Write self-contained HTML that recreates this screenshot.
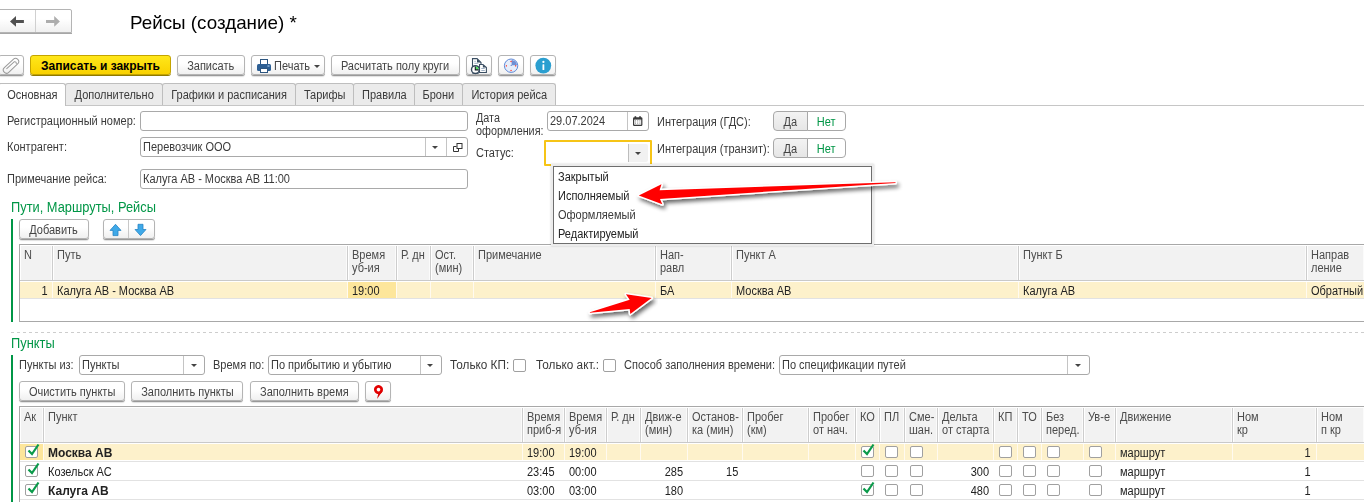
<!DOCTYPE html>
<html lang="ru"><head><meta charset="utf-8"><title>Рейсы (создание)</title>
<style>
*{box-sizing:border-box;margin:0;padding:0}
html,body{width:1364px;height:502px;overflow:hidden;background:#fff}
body{position:relative;font-family:"Liberation Sans",sans-serif;font-size:12px;color:#3a3a3a}
.a{position:absolute}
.t{position:absolute;white-space:nowrap;line-height:14px;transform:scaleX(.917);transform-origin:0 0}
.t.r{transform-origin:100% 0;text-align:right}
.s{display:inline-block;white-space:nowrap;transform:scaleX(.917);transform-origin:50% 50%}
.btn{position:absolute;border:1px solid #b4b4b4;border-radius:3px;background:linear-gradient(#ffffff 40%,#f0f0f0);box-shadow:0 1px 0 #999,0 2px 1px rgba(0,0,0,.13);text-align:center;line-height:20px;white-space:nowrap;color:#444}
.bd .s{transform:none}
b{display:inline-block;transform:scaleX(1.0905);transform-origin:0 0}
.inp{position:absolute;border:1px solid #a9a9a9;border-radius:3px;background:#fff;height:20px}
.sep{position:absolute;top:0;bottom:0;width:1px;background:#c4c4c4}
.tab{position:absolute;top:83px;height:22px;border:1px solid #bebebe;border-bottom:none;background:#ebebeb;line-height:22px;text-align:center;border-radius:3px 3px 0 0;color:#3a3a3a}
.grn{color:#009646;font-size:14px;line-height:16px}
.hd{position:absolute;background:#f2f2f2;border-right:1px solid #cdcdcd;box-shadow:inset 1px 0 0 #fff,inset -1px 0 0 #fbfbfb}
.h{color:#4c4c4c;line-height:13px}
.cb{position:absolute;width:13px;height:12px;border:1px solid #a0a0a0;border-radius:2px;background:#fff}
.tri{position:absolute;width:0;height:0;border-left:3px solid transparent;border-right:3px solid transparent;border-top:3px solid #444}
</style></head><body>

<div class="btn" style="left:-2px;top:9px;width:74px;height:24px;border-radius:2px 2px 0 0;box-shadow:0 1px 0 #a6a6a6"></div>
<div class="a" style="left:35px;top:10px;width:1px;height:22px;background:#d0d0d0"></div>
<svg class="a" style="left:0;top:9px" width="72" height="24" viewBox="0 9 72 24"><path d="M10 21.4 L16 16.1 V19.9 H23.9 V22.9 H16 V26.7 Z" fill="#505050"/><path d="M59.9 21.4 L54.2 16.1 V19.9 H46 V22.9 H54.2 V26.7 Z" fill="#adadad"/></svg>
<div class="t" style="left:130px;top:11px;font-size:19px;line-height:24px;color:#000;transform:scaleX(.99)">Рейсы (создание) *</div>
<div class="btn" style="left:-2px;top:55px;width:26px;height:20px"></div>
<div class="btn bd" style="left:30px;top:55px;width:141px;height:20px;background:linear-gradient(#ffe71a,#f9d100);border-color:#c4a400;color:#000;font-weight:bold;box-shadow:0 1px 0 #8f7a00"><span class="s">Записать и закрыть</span></div>
<div class="btn " style="left:177px;top:55px;width:68px;height:20px;"><span class="s">Записать</span></div>
<div class="btn" style="left:251px;top:55px;width:74px;height:20px"></div>
<div class="t " style="left:274px;top:59px;color:#444">Печать</div>
<div class="tri" style="left:314px;top:65px"></div>
<div class="btn " style="left:331px;top:55px;width:129px;height:20px;"><span class="s">Расчитать полу круги</span></div>
<div class="btn" style="left:466px;top:55px;width:26px;height:20px"></div>
<div class="btn" style="left:498px;top:55px;width:26px;height:20px"></div>
<div class="btn" style="left:530px;top:55px;width:26px;height:20px"></div>
<div class="a" style="left:0;top:105px;width:1364px;height:1px;background:#c6c6c6"></div>
<div class="tab" style="left:-2px;width:68px;background:#fff;height:23px;"><span class="s">Основная</span></div>
<div class="tab" style="left:65px;width:98px;"><span class="s">Дополнительно</span></div>
<div class="tab" style="left:162px;width:134px;"><span class="s">Графики и расписания</span></div>
<div class="tab" style="left:295px;width:59px;"><span class="s">Тарифы</span></div>
<div class="tab" style="left:353px;width:62px;"><span class="s">Правила</span></div>
<div class="tab" style="left:414px;width:49px;"><span class="s">Брони</span></div>
<div class="tab" style="left:462px;width:94px;"><span class="s">История рейса</span></div>
<div class="t " style="left:7px;top:114px;">Регистрационный номер:</div>
<div class="inp" style="left:140px;top:111px;width:328px"></div>
<div class="t " style="left:7px;top:140px;">Контрагент:</div>
<div class="inp" style="left:140px;top:137px;width:328px"><div class="sep" style="left:284px"></div><div class="sep" style="left:305px"></div></div>
<div class="t " style="left:143.3px;top:140px;color:#222transform:scaleX(0.93);">Перевозчик ООО</div>
<div class="tri" style="left:432px;top:146px"></div>
<div class="t " style="left:7px;top:172px;">Примечание рейса:</div>
<div class="inp" style="left:140px;top:169px;width:328px"></div>
<div class="t " style="left:143.3px;top:172px;color:#222transform:scaleX(0.926);">Калуга АВ - Москва АВ 11:00</div>
<div class="t " style="left:476px;top:111px;line-height:13px;margin-top:1px;transform:scaleX(0.9);">Дата<br>оформления:</div>
<div class="inp" style="left:547px;top:111px;width:102px"><div class="sep" style="left:79px"></div></div>
<div class="t " style="left:550.3px;top:114px;color:#222transform:scaleX(0.895);">29.07.2024</div>
<div class="t " style="left:476px;top:146px;">Статус:</div>
<div class="a" style="left:544px;top:140px;width:108px;height:26px;border:2px solid #f6c416;border-radius:1px;background:#fff"></div>
<div class="a" style="left:628px;top:144px;width:1px;height:18px;background:#bdbdbd"></div>
<div class="a" style="left:629px;top:144px;width:19px;height:18px;background:#f1f1f1;border-radius:0 2px 2px 0"></div>
<div class="tri" style="left:635px;top:152px"></div>
<div class="t " style="left:657px;top:115px;">Интеграция (ГДС):</div>
<div class="t " style="left:657px;top:142px;">Интеграция (транзит):</div>
<div class="btn" style="left:773px;top:111px;width:35px;height:20px;border-radius:4px 0 0 4px;border-color:#a8a8a8;box-shadow:none;background:linear-gradient(#f3f3f3,#e6e6e6)"><span class="s">Да</span></div>
<div class="btn" style="left:807px;top:111px;width:39px;height:20px;border-radius:0 4px 4px 0;border-color:#a8a8a8;box-shadow:none;color:#009646;background:#fff"><span class="s">Нет</span></div>
<div class="btn" style="left:773px;top:138px;width:35px;height:20px;border-radius:4px 0 0 4px;border-color:#a8a8a8;box-shadow:none;background:linear-gradient(#f3f3f3,#e6e6e6)"><span class="s">Да</span></div>
<div class="btn" style="left:807px;top:138px;width:39px;height:20px;border-radius:0 4px 4px 0;border-color:#a8a8a8;box-shadow:none;color:#009646;background:#fff"><span class="s">Нет</span></div>
<div class="t grn" style="left:10.6px;top:199px">Пути, Маршруты, Рейсы</div>
<div class="a" style="left:11px;top:219px;width:2px;height:103px;background:#009646"></div>
<div class="btn " style="left:19px;top:219px;width:70px;height:20px;"><span class="s">Добавить</span></div>
<div class="btn" style="left:103px;top:219px;width:52px;height:20px"></div>
<div class="a" style="left:128px;top:220px;width:1px;height:18px;background:#c8c8c8"></div>
<div class="a" style="left:19px;top:244px;width:1345px;height:78px;border:1px solid #a8a8a8;border-right:none;background:#fff"></div>
<div class="a" style="left:20px;top:280px;width:1344px;height:1px;background:#c9c9c9"></div>
<div class="a" style="left:20px;top:282px;width:1344px;height:16px;background:#fdf1cb"></div>
<div class="a" style="left:20px;top:298px;width:1344px;height:1px;background:#e2e2e2"></div>
<div class="hd" style="left:20px;top:246px;width:33px;height:34px"></div>
<div class="t h" style="left:24px;top:249px;">N</div>
<div class="a" style="left:52px;top:282px;width:1px;height:16px;background:#fffaf0"></div>
<div class="hd" style="left:53px;top:246px;width:295px;height:34px"></div>
<div class="t h" style="left:57px;top:249px;">Путь</div>
<div class="a" style="left:347px;top:282px;width:1px;height:16px;background:#fffaf0"></div>
<div class="hd" style="left:348px;top:246px;width:49px;height:34px"></div>
<div class="t h" style="left:352px;top:249px;">Время<br>уб-ия</div>
<div class="a" style="left:396px;top:282px;width:1px;height:16px;background:#fffaf0"></div>
<div class="hd" style="left:397px;top:246px;width:34px;height:34px"></div>
<div class="t h" style="left:401px;top:249px;">Р. дн</div>
<div class="a" style="left:430px;top:282px;width:1px;height:16px;background:#fffaf0"></div>
<div class="hd" style="left:431px;top:246px;width:43px;height:34px"></div>
<div class="t h" style="left:435px;top:249px;">Ост.<br>(мин)</div>
<div class="a" style="left:473px;top:282px;width:1px;height:16px;background:#fffaf0"></div>
<div class="hd" style="left:474px;top:246px;width:182px;height:34px"></div>
<div class="t h" style="left:478px;top:249px;">Примечание</div>
<div class="a" style="left:655px;top:282px;width:1px;height:16px;background:#fffaf0"></div>
<div class="hd" style="left:656px;top:246px;width:76px;height:34px"></div>
<div class="t h" style="left:660px;top:249px;">Нап-<br>равл</div>
<div class="a" style="left:731px;top:282px;width:1px;height:16px;background:#fffaf0"></div>
<div class="hd" style="left:732px;top:246px;width:287px;height:34px"></div>
<div class="t h" style="left:736px;top:249px;">Пункт А</div>
<div class="a" style="left:1018px;top:282px;width:1px;height:16px;background:#fffaf0"></div>
<div class="hd" style="left:1019px;top:246px;width:288px;height:34px"></div>
<div class="t h" style="left:1023px;top:249px;">Пункт Б</div>
<div class="a" style="left:1306px;top:282px;width:1px;height:16px;background:#fffaf0"></div>
<div class="hd" style="left:1307px;top:246px;width:58px;height:34px"></div>
<div class="t h" style="left:1311px;top:249px;">Направ<br>ление</div>
<div class="a" style="left:348px;top:282px;width:48px;height:16px;background:#fde69b"></div>
<div class="t r " style="right:1316px;top:284px;color:#222">1</div>
<div class="t " style="left:57px;top:284px;color:#222">Калуга АВ - Москва АВ</div>
<div class="t " style="left:352px;top:284px;color:#222">19:00</div>
<div class="t " style="left:660.4px;top:284px;color:#222">БА</div>
<div class="t " style="left:736px;top:284px;color:#222">Москва АВ</div>
<div class="t " style="left:1023px;top:284px;color:#222">Калуга АВ</div>
<div class="t " style="left:1311px;top:284px;color:#222">Обратный</div>
<div class="a" style="left:11px;top:332px;width:1353px;height:1px;background:repeating-linear-gradient(90deg,#cdcdcd 0,#cdcdcd 3px,transparent 3px,transparent 6px)"></div>
<div class="t grn" style="left:11px;top:335px">Пункты</div>
<div class="a" style="left:11px;top:355px;width:2px;height:150px;background:#009646"></div>
<div class="t " style="left:19px;top:358px;">Пункты из:</div>
<div class="inp" style="left:79px;top:355px;width:126px;height:20px"><div class="sep" style="left:103px"></div></div>
<div class="t " style="left:81.5px;top:358px;color:#222transform:scaleX(0.95);">Пункты</div>
<div class="tri" style="left:191px;top:364px"></div>
<div class="t " style="left:213px;top:358px;">Время по:</div>
<div class="inp" style="left:268px;top:355px;width:174px;height:20px"><div class="sep" style="left:151px"></div></div>
<div class="t " style="left:271px;top:358px;color:#222transform:scaleX(0.9);">По прибытию и убытию</div>
<div class="tri" style="left:427px;top:364px"></div>
<div class="t " style="left:450px;top:358px;transform:scaleX(0.98);">Только КП:</div>
<div class="cb" style="left:513px;top:359px;width:13px;height:13px"></div>
<div class="t " style="left:535.5px;top:358px;transform:scaleX(0.98);">Только акт.:</div>
<div class="cb" style="left:603px;top:359px;width:13px;height:13px"></div>
<div class="t " style="left:624px;top:358px;">Способ заполнения времени:</div>
<div class="inp" style="left:779px;top:355px;width:311px;height:20px"><div class="sep" style="left:287px"></div></div>
<div class="t " style="left:782px;top:358px;color:#222transform:scaleX(0.9);">По спецификации путей</div>
<div class="tri" style="left:1075px;top:364px"></div>
<div class="btn " style="left:19px;top:381px;width:106px;height:20px;"><span class="s">Очистить пункты</span></div>
<div class="btn " style="left:131px;top:381px;width:112px;height:20px;"><span class="s">Заполнить пункты</span></div>
<div class="btn " style="left:250px;top:381px;width:109px;height:20px;"><span class="s">Заполнить время</span></div>
<div class="btn" style="left:365px;top:381px;width:26px;height:20px"></div>
<div class="a" style="left:19px;top:406px;width:1345px;height:101px;border:1px solid #a8a8a8;border-right:none;background:#fff"></div>
<div class="a" style="left:20px;top:442px;width:1344px;height:1px;background:#c9c9c9"></div>
<div class="a" style="left:20px;top:444px;width:1344px;height:16px;background:#fdf1cb"></div>
<div class="a" style="left:20px;top:444px;width:23px;height:16px;background:#fde69b"></div>
<div class="a" style="left:20px;top:461px;width:1344px;height:1px;background:#e2e2e2"></div>
<div class="a" style="left:20px;top:480px;width:1344px;height:1px;background:#e2e2e2"></div>
<div class="a" style="left:20px;top:499px;width:1344px;height:1px;background:#e2e2e2"></div>
<div class="hd" style="left:20px;top:408px;width:24px;height:34px"></div>
<div class="t h" style="left:24px;top:411px;">Ак</div>
<div class="a" style="left:43px;top:444px;width:1px;height:16px;background:#fffaf0"></div>
<div class="hd" style="left:44px;top:408px;width:479px;height:34px"></div>
<div class="t h" style="left:48px;top:411px;">Пункт</div>
<div class="a" style="left:522px;top:444px;width:1px;height:16px;background:#fffaf0"></div>
<div class="hd" style="left:523px;top:408px;width:42px;height:34px"></div>
<div class="t h" style="left:527px;top:411px;">Время<br>приб-я</div>
<div class="a" style="left:564px;top:444px;width:1px;height:16px;background:#fffaf0"></div>
<div class="hd" style="left:565px;top:408px;width:42px;height:34px"></div>
<div class="t h" style="left:569px;top:411px;">Время<br>уб-ия</div>
<div class="a" style="left:606px;top:444px;width:1px;height:16px;background:#fffaf0"></div>
<div class="hd" style="left:607px;top:408px;width:34px;height:34px"></div>
<div class="t h" style="left:611px;top:411px;">Р. дн</div>
<div class="a" style="left:640px;top:444px;width:1px;height:16px;background:#fffaf0"></div>
<div class="hd" style="left:641px;top:408px;width:47px;height:34px"></div>
<div class="t h" style="left:645px;top:411px;">Движ-е<br>(мин)</div>
<div class="a" style="left:687px;top:444px;width:1px;height:16px;background:#fffaf0"></div>
<div class="hd" style="left:688px;top:408px;width:55px;height:34px"></div>
<div class="t h" style="left:692px;top:411px;">Останов-<br>ка (мин)</div>
<div class="a" style="left:742px;top:444px;width:1px;height:16px;background:#fffaf0"></div>
<div class="hd" style="left:743px;top:408px;width:66px;height:34px"></div>
<div class="t h" style="left:747px;top:411px;">Пробег<br>(км)</div>
<div class="a" style="left:808px;top:444px;width:1px;height:16px;background:#fffaf0"></div>
<div class="hd" style="left:809px;top:408px;width:47px;height:34px"></div>
<div class="t h" style="left:813px;top:411px;">Пробег<br>от нач.</div>
<div class="a" style="left:855px;top:444px;width:1px;height:16px;background:#fffaf0"></div>
<div class="hd" style="left:856px;top:408px;width:24px;height:34px"></div>
<div class="t h" style="left:860px;top:411px;">КО</div>
<div class="a" style="left:879px;top:444px;width:1px;height:16px;background:#fffaf0"></div>
<div class="hd" style="left:880px;top:408px;width:25px;height:34px"></div>
<div class="t h" style="left:884px;top:411px;">ПЛ</div>
<div class="a" style="left:904px;top:444px;width:1px;height:16px;background:#fffaf0"></div>
<div class="hd" style="left:905px;top:408px;width:33px;height:34px"></div>
<div class="t h" style="left:909px;top:411px;">Сме-<br>шан.</div>
<div class="a" style="left:937px;top:444px;width:1px;height:16px;background:#fffaf0"></div>
<div class="hd" style="left:938px;top:408px;width:56px;height:34px"></div>
<div class="t h" style="left:942px;top:411px;">Дельта<br>от старта</div>
<div class="a" style="left:993px;top:444px;width:1px;height:16px;background:#fffaf0"></div>
<div class="hd" style="left:994px;top:408px;width:24px;height:34px"></div>
<div class="t h" style="left:998px;top:411px;">КП</div>
<div class="a" style="left:1017px;top:444px;width:1px;height:16px;background:#fffaf0"></div>
<div class="hd" style="left:1018px;top:408px;width:24px;height:34px"></div>
<div class="t h" style="left:1022px;top:411px;">ТО</div>
<div class="a" style="left:1041px;top:444px;width:1px;height:16px;background:#fffaf0"></div>
<div class="hd" style="left:1042px;top:408px;width:42px;height:34px"></div>
<div class="t h" style="left:1046px;top:411px;">Без<br>перед.</div>
<div class="a" style="left:1083px;top:444px;width:1px;height:16px;background:#fffaf0"></div>
<div class="hd" style="left:1084px;top:408px;width:32px;height:34px"></div>
<div class="t h" style="left:1088px;top:411px;">Ув-е</div>
<div class="a" style="left:1115px;top:444px;width:1px;height:16px;background:#fffaf0"></div>
<div class="hd" style="left:1116px;top:408px;width:117px;height:34px"></div>
<div class="t h" style="left:1120px;top:411px;">Движение</div>
<div class="a" style="left:1232px;top:444px;width:1px;height:16px;background:#fffaf0"></div>
<div class="hd" style="left:1233px;top:408px;width:84px;height:34px"></div>
<div class="t h" style="left:1237px;top:411px;">Ном<br>кр</div>
<div class="a" style="left:1316px;top:444px;width:1px;height:16px;background:#fffaf0"></div>
<div class="hd" style="left:1317px;top:408px;width:48px;height:34px"></div>
<div class="t h" style="left:1321px;top:411px;">Ном<br>п кр</div>
<div class="cb" style="left:25px;top:446px"></div>
<svg class="a" style="left:25.5px;top:443px" width="14" height="14" viewBox="0 0 14 14"><path d="M2.5 7.5 L6 11 L12.5 1.5" fill="none" stroke="#0a9a4a" stroke-width="2.2"/></svg>
<div class="t " style="left:48px;top:446px;color:#222"><b>Москва АВ</b></div>
<div class="t " style="left:527px;top:446px;color:#222">19:00</div>
<div class="t " style="left:569px;top:446px;color:#222">19:00</div>
<div class="cb" style="left:861px;top:446px"></div>
<div class="cb" style="left:885px;top:446px"></div>
<div class="cb" style="left:910px;top:446px"></div>
<div class="cb" style="left:999px;top:446px"></div>
<div class="cb" style="left:1023px;top:446px"></div>
<div class="cb" style="left:1047px;top:446px"></div>
<div class="cb" style="left:1089px;top:446px"></div>
<svg class="a" style="left:861px;top:443px" width="14" height="14" viewBox="0 0 14 14"><path d="M2.5 7.5 L6 11 L12.5 1.5" fill="none" stroke="#0a9a4a" stroke-width="2.2"/></svg>
<div class="t " style="left:1120px;top:446px;color:#222">маршрут</div>
<div class="t r " style="right:53px;top:446px;color:#222">1</div>
<div class="cb" style="left:25px;top:465px"></div>
<svg class="a" style="left:25.5px;top:462px" width="14" height="14" viewBox="0 0 14 14"><path d="M2.5 7.5 L6 11 L12.5 1.5" fill="none" stroke="#0a9a4a" stroke-width="2.2"/></svg>
<div class="t " style="left:48px;top:465px;color:#222">Козельск АС</div>
<div class="t " style="left:527px;top:465px;color:#222">23:45</div>
<div class="t " style="left:569px;top:465px;color:#222">00:00</div>
<div class="t r " style="right:681px;top:465px;color:#222">285</div>
<div class="t r " style="right:626px;top:465px;color:#222">15</div>
<div class="cb" style="left:861px;top:465px"></div>
<div class="cb" style="left:885px;top:465px"></div>
<div class="cb" style="left:910px;top:465px"></div>
<div class="cb" style="left:999px;top:465px"></div>
<div class="cb" style="left:1023px;top:465px"></div>
<div class="cb" style="left:1047px;top:465px"></div>
<div class="cb" style="left:1089px;top:465px"></div>
<div class="t r " style="right:375px;top:465px;color:#222">300</div>
<div class="t " style="left:1120px;top:465px;color:#222">маршрут</div>
<div class="t r " style="right:53px;top:465px;color:#222">1</div>
<div class="cb" style="left:25px;top:484px"></div>
<svg class="a" style="left:25.5px;top:481px" width="14" height="14" viewBox="0 0 14 14"><path d="M2.5 7.5 L6 11 L12.5 1.5" fill="none" stroke="#0a9a4a" stroke-width="2.2"/></svg>
<div class="t " style="left:48px;top:484px;color:#222"><b>Калуга АВ</b></div>
<div class="t " style="left:527px;top:484px;color:#222">03:00</div>
<div class="t " style="left:569px;top:484px;color:#222">03:00</div>
<div class="t r " style="right:681px;top:484px;color:#222">180</div>
<div class="cb" style="left:861px;top:484px"></div>
<div class="cb" style="left:885px;top:484px"></div>
<div class="cb" style="left:910px;top:484px"></div>
<div class="cb" style="left:999px;top:484px"></div>
<div class="cb" style="left:1023px;top:484px"></div>
<div class="cb" style="left:1047px;top:484px"></div>
<div class="cb" style="left:1089px;top:484px"></div>
<svg class="a" style="left:861px;top:481px" width="14" height="14" viewBox="0 0 14 14"><path d="M2.5 7.5 L6 11 L12.5 1.5" fill="none" stroke="#0a9a4a" stroke-width="2.2"/></svg>
<div class="t r " style="right:375px;top:484px;color:#222">480</div>
<div class="t " style="left:1120px;top:484px;color:#222">маршрут</div>
<div class="t r " style="right:53px;top:484px;color:#222">1</div>
<svg class="a" style="left:0;top:55px" width="24" height="21" viewBox="0 55 24 21"><g transform="translate(11 65.8) rotate(-43)" fill="none" stroke="#9a9a9a" stroke-width="1"><rect x="-9.3" y="-3.2" width="18.6" height="6.4" rx="3.2"/><path d="M-5.5 -0.8 L5 -0.8 A1.6 1.6 0 0 1 5 2.2"/></g></svg>
<svg class="a" style="left:256px;top:58px" width="16" height="16" viewBox="0 0 16 16"><rect x="4.5" y="1.5" width="7" height="6" fill="#fff" stroke="#2d5680" stroke-width="1"/><rect x="1" y="6" width="14" height="7" rx="1.5" fill="#2d5f94"/><rect x="4.5" y="10.5" width="7" height="4" fill="#fff" stroke="#2d5680" stroke-width="1"/><rect x="11.5" y="7.5" width="2" height="1" fill="#bfe0ff"/></svg>
<svg class="a" style="left:470px;top:57px" width="18" height="18" viewBox="0 0 18 18"><path d="M2.5 1.6 H7 L11 5.6 V10 H2.5 Z" fill="#fff" stroke="#3b4f63" stroke-width="1.1"/><path d="M7 1.6 V5.6 H11 Z" fill="#3b4f63"/><path d="M9.5 7.5 H12.9 L16.4 10.4 V15.5 H9.5 Z" fill="#fff" stroke="#3b4f63" stroke-width="1.1"/><path d="M12.9 7.5 V10.4 H16.4 Z" fill="#3b4f63"/><path d="M11.3 11.5 H14.8 M11.3 13.5 H14.8 M4.3 4.3 H5.8 M4.3 6.3 H8.3" stroke="#9fb0c4" stroke-width="1"/><rect x="2.4" y="15.6" width="6.2" height="1.3" fill="#3b4f63"/><circle cx="5.4" cy="12.6" r="3.9" fill="#fff" stroke="#34485c" stroke-width="1.4"/><path d="M5.4 12.6 V9.4 A3.2 3.2 0 0 1 8.6 12.6 Z" fill="#4fe060"/><path d="M5.3 9.6 V12.9 H8.6" fill="none" stroke="#101820" stroke-width="1.1"/></svg>
<svg class="a" style="left:503px;top:58px" width="16" height="16" viewBox="0 0 16 16"><circle cx="8.1" cy="7.7" r="6.7" fill="#e6eefb" stroke="#5f88d6" stroke-width="1"/><path d="M8.6 7.3 V1.9 A5.6 5.6 0 0 1 14 7.3 Z" fill="#6f8fd4"/><rect x="7.7" y="6.9" width="1" height="1" fill="#4a6cc0"/><g fill="#ff3a2a"><rect x="7.4" y="2.9" width="1.3" height="1.2"/><rect x="7.4" y="11.9" width="1.3" height="1.2"/><rect x="2.8" y="7.2" width="1.2" height="1.3"/><rect x="12" y="7.2" width="1.2" height="1.3"/></g></svg>
<svg class="a" style="left:535px;top:57px" width="17" height="17" viewBox="0 0 17 17"><circle cx="8.3" cy="8.6" r="7.9" fill="#2b9fd0"/><rect x="7.5" y="7.3" width="1.8" height="5.6" rx=".5" fill="#fff"/><circle cx="8.4" cy="4.9" r="1.1" fill="#fff"/></svg>
<svg class="a" style="left:452px;top:142px" width="12" height="12" viewBox="0 0 12 12"><rect x="5" y="1.5" width="5" height="5" fill="#fff" stroke="#333" stroke-width="1"/><path d="M4.5 4.5 H1.5 V9.5 H6.5 V7" fill="none" stroke="#333" stroke-width="1"/></svg>
<svg class="a" style="left:633px;top:115px" width="10" height="11" viewBox="0 0 10 11"><rect x="0" y="2.2" width="9.4" height="8.7" rx="1.2" fill="#3a3a3a"/><rect x="1.2" y="4.6" width="7" height="5.1" fill="#fff"/><rect x="1.6" y="1.2" width="1.6" height="2" fill="#3a3a3a"/><rect x="6.2" y="1.2" width="1.6" height="2" fill="#3a3a3a"/><g fill="#777"><rect x="2" y="5.4" width="1" height="1"/><rect x="4.2" y="5.4" width="1" height="1"/><rect x="6.4" y="5.4" width="1" height="1"/><rect x="2" y="7.6" width="1" height="1"/><rect x="4.2" y="7.6" width="1" height="1"/><rect x="6.4" y="7.6" width="1" height="1"/></g></svg>
<svg class="a" style="left:104px;top:220px" width="51" height="20" viewBox="104 220 51 20"><path d="M115.5 224.3 L121 230.4 H118 V235.6 H113 V230.4 H110 Z" fill="#3fa9e8" stroke="#2684c4" stroke-width=".8" stroke-linejoin="round"/><path d="M140.5 235.6 L146 229.5 H143 V224.3 H138 V229.5 H135 Z" fill="#3fa9e8" stroke="#2684c4" stroke-width=".8" stroke-linejoin="round"/></svg>
<svg class="a" style="left:372px;top:384px" width="13" height="16" viewBox="372 384 13 16"><path d="M378.5 385.1 a4.5 4.5 0 1 1 -0.01 0 Z M378.5 387.8 a1.8 1.8 0 1 0 0.01 0 Z" fill="#e30000" fill-rule="evenodd"/><path d="M378.3 393.6 L377 399 L383 390.5 Z" fill="#d80000"/></svg>
<div class="a" style="left:551px;top:164px;width:323px;height:82px;background:#ececec;box-shadow:0 0 2px rgba(0,0,0,.18)"></div>
<div class="a" style="left:553px;top:166px;width:319px;height:78px;background:#fff;border:1px solid #6e6e6e"></div>
<div class="t " style="left:558px;top:170px;color:#222">Закрытый</div>
<div class="t " style="left:558px;top:189px;color:#222">Исполняемый</div>
<div class="t " style="left:558px;top:208px;color:#222transform:scaleX(0.888);">Оформляемый</div>
<div class="t " style="left:558px;top:227px;color:#222">Редактируемый</div>
<svg class="a" style="left:0;top:0" width="1364" height="502" viewBox="0 0 1364 502">
<defs><filter id="sh" x="-10%" y="-30%" width="120%" height="180%"><feGaussianBlur in="SourceAlpha" stdDeviation="2.2"/><feOffset dx="1.5" dy="2.5"/><feComponentTransfer><feFuncA type="linear" slope=".6"/></feComponentTransfer><feMerge><feMergeNode/><feMergeNode in="SourceGraphic"/></feMerge></filter></defs>
<path filter="url(#sh)" d="M638.8 195.4 L661.5 184.2 L659.6 190.2 L895.5 182.3 L895.5 182.9 L660 198.9 L662.3 204.3 Z" fill="#ff0000" stroke="#fff" stroke-width="3" paint-order="stroke" stroke-linejoin="round"/>
<path filter="url(#sh)" d="M651.6 298 L625.9 294.2 L629.7 299.7 L589.9 312.2 L589.9 312.8 L629.7 309 L630.3 313.9 Z" fill="#ff0000" stroke="#fff" stroke-width="3" paint-order="stroke" stroke-linejoin="round"/>
</svg>
</body></html>
